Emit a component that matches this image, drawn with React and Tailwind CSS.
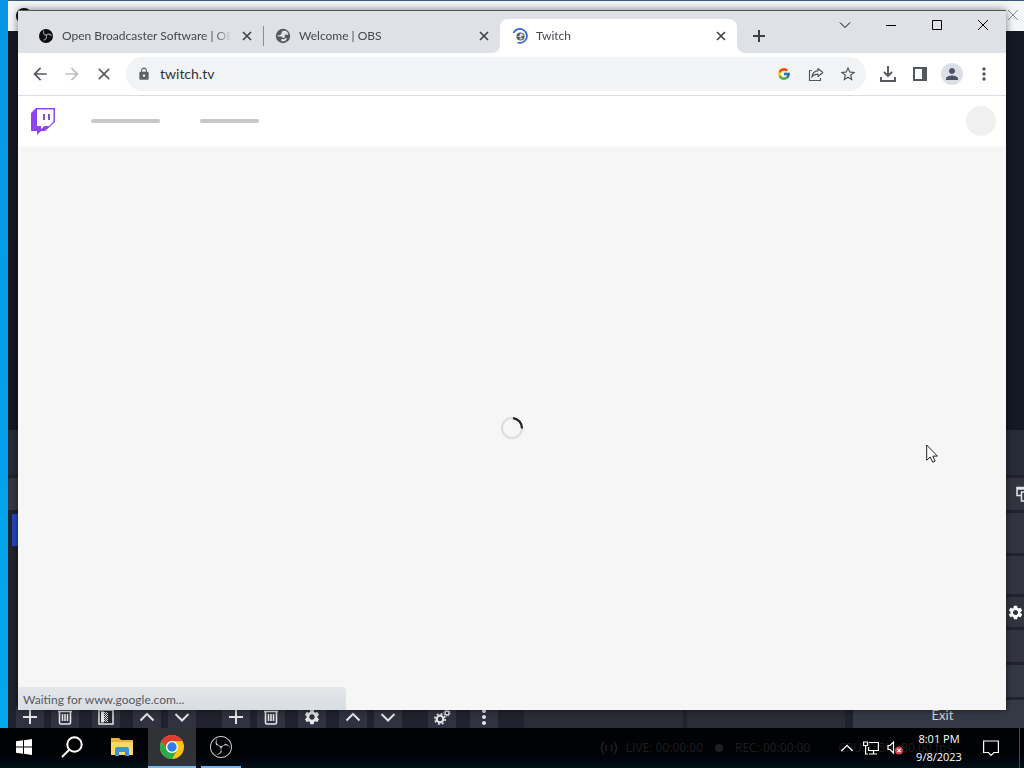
import React from "react";
import { MdArrowBack, MdArrowForward, MdClose, MdLock, MdStarOutline, MdMoreVert, MdPerson, MdSettings } from "react-icons/md";
import { FcGoogle } from "react-icons/fc";
import { SiObsstudio } from "react-icons/si";

const line = { fill: "none", stroke: "currentColor" };

function Chevron({ up, className, width = 2 }) {
  return (
    <svg viewBox="0 0 16 16" className={className} {...line} strokeWidth={width}>
      <path d={up ? "M1.5 11.5 8 5l6.5 6.5" : "M1.5 5 8 11.5 14.5 5"} />
    </svg>
  );
}

function ObsDisc({ className }) {
  return (
    <svg viewBox="0 0 24 24" className={className} fill="none">
      <circle cx="12" cy="12" r="12" fill="#0b0c10" />
      <g stroke="#9a9ea6" strokeWidth="1.800" strokeLinecap="round">
        <path d="M12.500 11C8.500 10 6.800 7 8 3.500" />
        <path d="M12.500 11c3-3.200 6.500-2.800 8.500.500" />
        <path d="M12.500 11c1.200 4-1 7.300-4.500 8" />
      </g>
    </svg>
  );
}

function Globe({ className }) {
  return (
    <svg viewBox="0 0 16 16" className={className}>
      <circle cx="8" cy="8" r="7.200" fill="#575b60" />
      <path d="M8 2.800 11.500 3 13.300 5.500 12.800 7 11 6.500 9.500 7.200 10.200 8.800 9 10 7 9.300 5.500 8.300 2.800 8.500 2.500 7.500 5 7 6.500 5.800 6.800 4z" fill="#dfe2e6" />
      <path d="m6.500 11 2.500.300 1.500-1.300 1.500.500-1.500 2.300L8 13.500 6 12.800z" fill="#dfe2e6" />
    </svg>
  );
}

function PlusIcon() {
  return (
    <svg viewBox="0 0 14 14" className="size-3.5" {...line} strokeWidth="2">
      <path d="M7 0v14M0 7h14" />
    </svg>
  );
}

function TrashIcon() {
  return (
    <svg viewBox="0 0 16 16" className="size-4" {...line} strokeWidth="1.6">
      <path d="M1 2.500h14M2.500 2.500v11q0 1.500 1.500 1.500h8q1.500 0 1.500-1.500v-11M5.500 5v7M8 5v7M10.500 5v7" />
    </svg>
  );
}

function FilterIcon() {
  return (
    <svg viewBox="0 0 16 16" className="size-4">
      <rect x="1" y="1" width="14" height="14" fill="#24262f" stroke="currentColor" strokeWidth="1.500" />
      <path d="M3 2.500h3v11H3z" fill="currentColor" />
      <path d="M6.500 3v10M8.500 3v10" stroke="currentColor" strokeDasharray="1 1" />
      <path d="M7.500 4v9M9.500 4v9" stroke="currentColor" strokeDasharray="1 1" />
    </svg>
  );
}

function GearsIcon() {
  return (
    <svg viewBox="0 0 18 18" className="size-[18px]" {...line}>
      <circle cx="7" cy="11" r="3.300" strokeWidth="2.200" />
      <circle cx="7" cy="11" r="5.200" strokeWidth="1.600" strokeDasharray="2 2.080" />
      <circle cx="14" cy="5" r="2" strokeWidth="1.400" />
      <circle cx="14" cy="5" r="3.200" strokeWidth="1" strokeDasharray="1.200 1.300" />
    </svg>
  );
}

function DockButton({ label, children }) {
  return (
    <button aria-label={label} className="flex h-[22px] w-7 items-center justify-center bg-[#30333f]">
      {children}
    </button>
  );
}

function DockTools({ middleLabel, middle }) {
  return (
    <div className="flex gap-[13px]">
      <div className="flex gap-[7px]">
        <DockButton label="Add"><PlusIcon /></DockButton>
        <DockButton label="Remove"><TrashIcon /></DockButton>
      </div>
      <DockButton label={middleLabel}>{middle}</DockButton>
      <div className="flex gap-[7px]">
        <DockButton label="Move up"><Chevron up className="size-4" /></DockButton>
        <DockButton label="Move down"><Chevron className="size-4" /></DockButton>
      </div>
    </div>
  );
}

function ObsWindow() {
  return (
    <section className="absolute inset-y-0 right-0 left-2 flex flex-col overflow-hidden bg-[#20232d] text-[#e4e6ea]">
      <header className="flex h-[31px] shrink-0 items-start justify-between border-t border-[#3c587c] bg-[#f5f6f8] pt-[7px] pl-2">
        <ObsDisc className="size-4" />
        <button aria-label="Close OBS" className="pr-1 text-[#888]">
          <svg viewBox="0 0 14 14" className="size-3.5" {...line}><path d="m2 2 10 10M12 2 2 12" /></svg>
        </button>
      </header>
      <div className="flex-1 bg-[#151923]" />
      <div className="h-[45px] bg-[#272c38]" />
      <div className="flex h-[253px] shrink-0 gap-2 pt-[3px]">
        <div className="flex flex-1 flex-col justify-between">
          <div>
            <div className="h-8 rounded-tl bg-[#363941]" />
            <div className="mt-1 ml-1 h-8 w-48 bg-[#2548bf]" />
          </div>
          <div className="flex gap-[26px] pl-2">
            <DockTools middleLabel="Filters" middle={<FilterIcon />} />
            <DockTools middleLabel="Properties" middle={<MdSettings className="size-[18px]" />} />
            <div className="flex gap-[14px]">
              <DockButton label="Advanced audio"><GearsIcon /></DockButton>
              <DockButton label="More"><MdMoreVert className="size-6" /></DockButton>
            </div>
            <div className="flex flex-1 gap-1">
              <div className="flex-1 bg-[#2a2c36]" />
              <div className="flex-1 bg-[#2a2c36]" />
            </div>
          </div>
        </div>
        <div className="flex w-[171px] flex-col gap-[3px]">
          <button aria-label="Studio mode" className="flex h-8 items-center justify-end bg-[#32353f]">
            <svg viewBox="0 0 8 16" className="h-4 w-2" {...line} strokeWidth="1.500">
              <path d="M8 1.500H1v8h4M1 3h7M8 6H5.500v9H8" />
            </svg>
          </button>
          <div className="h-10 bg-[#32353f]" />
          <div className="h-[38px] bg-[#32353f]" />
          <button aria-label="Settings" className="flex h-[30px] items-center justify-end bg-[#32353f] text-white">
            <MdSettings className="size-[17px]" />
          </button>
          <div className="h-8 bg-[#32353f]" />
          <div className="h-8 bg-[#343843]" />
          <button className="flex flex-1 items-center justify-center bg-[#363a46] pt-1 pl-2 text-[13px] text-[#d5d7db]">Exit</button>
        </div>
      </div>
    </section>
  );
}

function LoadingFavicon() {
  return (
    <span className="relative flex size-4 shrink-0 items-center justify-center">
      <Globe className="size-[9px]" />
      <svg viewBox="0 0 16 16" className="absolute inset-0 size-4" fill="none" stroke="#3569d4" strokeWidth="1.800">
        <path d="M1.500 5A7 7 0 1 1 5.500 14.500" />
      </svg>
    </span>
  );
}

function Tab({ title, icon, active, divider }) {
  return (
    <div className={active
      ? "relative flex h-[34px] max-w-[237px] flex-1 items-center rounded-t-lg bg-white pl-3"
      : "flex h-[34px] max-w-[237px] flex-1 items-center pl-3"}>
      {active && (
        <svg viewBox="0 0 8 8" className="absolute bottom-0 -left-2 size-2" fill="#fff"><path d="M8 0v8H0a8 8 0 0 0 8-8" /></svg>
      )}
      <button className="flex min-w-0 flex-1 items-center gap-2 text-left">
        {icon}
        <span className="flex-1 overflow-hidden mask-r-from-90% whitespace-nowrap">{title}</span>
      </button>
      <button aria-label={"Close " + title} className="flex w-8 items-center justify-center text-[#3c4043]">
        <svg viewBox="0 0 10 10" className="size-2.5" {...line} strokeWidth="1.600"><path d="m1 1 8 8M9 1 1 9" /></svg>
      </button>
      {divider && <span className="-mr-px h-5 w-px bg-[#8b8f94]" />}
      {active && (
        <svg viewBox="0 0 8 8" className="absolute -right-2 bottom-0 size-2" fill="#fff"><path d="M0 0v8h8a8 8 0 0 1-8-8" /></svg>
      )}
    </div>
  );
}

function CaptionButton({ label, d }) {
  return (
    <button aria-label={label} className="flex h-7 w-[46px] items-center justify-center text-black">
      <svg viewBox="0 0 12 12" className="size-3" {...line} strokeWidth="1"><path d={d} /></svg>
    </button>
  );
}

function ToolButton({ label, children }) {
  return <button aria-label={label} className="flex size-8 shrink-0 items-center justify-center text-[#54575c]">{children}</button>;
}

function BrowserWindow() {
  return (
    <section className="absolute inset-x-[18px] top-2.5 bottom-[18px] flex flex-col border-t border-[#55565c] bg-white text-xs text-[#45484d] shadow-[0_0_8px_rgba(0,0,0,0.5)]">
      <header className="flex h-[42px] shrink-0 items-end bg-[#dee1e6]">
        <div className="flex min-w-0 flex-1 pl-2">
          <Tab title="Open Broadcaster Software | OBS" divider icon={<span className="flex size-4 shrink-0 items-center justify-center"><ObsDisc className="size-3.5" /></span>} />
          <Tab title="Welcome | OBS" icon={<Globe className="size-4 shrink-0" />} />
          <Tab title="Twitch" active icon={<LoadingFavicon />} />
          <button aria-label="New tab" className="ml-2 flex h-[34px] w-7 items-center justify-center text-[#3c4043]">
            <svg viewBox="0 0 12 12" className="size-3" {...line} strokeWidth="2"><path d="M6 0v12M0 6h12" /></svg>
          </button>
        </div>
        <div className="flex self-start">
          <CaptionButton label="Search tabs" d="M1 3.500 6 8.500l5-5" />
          <CaptionButton label="Minimize" d="M1 6.500h10" />
          <CaptionButton label="Maximize" d="M1.500 1.500h9v9h-9z" />
          <CaptionButton label="Close window" d="m1 1 10 10M11 1 1 11" />
        </div>
      </header>

      <div className="flex h-[43px] shrink-0 items-center border-b border-[#dcdde1] px-1.5">
        <ToolButton label="Back"><MdArrowBack className="size-5" /></ToolButton>
        <ToolButton label="Forward"><MdArrowForward className="size-5 text-[#bcbec1]" /></ToolButton>
        <ToolButton label="Stop loading"><MdClose className="size-5" /></ToolButton>
        <div className="mx-1.5 flex h-[34px] flex-1 items-center rounded-full bg-[#f1f3f4] pr-0.5 pl-[11px]">
          <MdLock className="size-3.5 text-[#5f6368]" />
          <input aria-label="Address" defaultValue="twitch.tv" className="ml-[9px] min-w-0 flex-1 bg-transparent text-sm text-[#303236] outline-none" />
          <ToolButton label="Search with Google"><FcGoogle className="size-3.5" /></ToolButton>
          <ToolButton label="Share">
            <svg viewBox="0 0 16 16" className="size-4" {...line} strokeWidth="1.200">
              <path d="M4 4.500H1.500v10h11V12M10 2.500 14.800 6.500 10 10.500V8.200C7 8.200 5 9.200 3.800 11.200 4.200 7.500 6.400 5.200 10 4.700z" strokeLinejoin="round" />
            </svg>
          </ToolButton>
          <ToolButton label="Bookmark"><MdStarOutline className="size-[18px]" /></ToolButton>
        </div>
        <ToolButton label="Downloads">
          <svg viewBox="0 0 16 16" className="size-4" {...line} strokeWidth="1.900"><path d="M8 0v9.500M4 6l4 4 4-4M1 11v4h14v-4" /></svg>
        </ToolButton>
        <ToolButton label="Side panel">
          <svg viewBox="0 0 14 14" className="size-3.5" fill="currentColor"><path d="M0 0h14v14H0zM2 2v10h7V2z" fillRule="evenodd" /></svg>
        </ToolButton>
        <ToolButton label="Profile">
          <span className="flex size-[22px] items-center justify-center rounded-full bg-[#dcdfe6]"><MdPerson className="size-[18px] text-[#4c5468]" /></span>
        </ToolButton>
        <ToolButton label="Menu"><MdMoreVert className="size-5" /></ToolButton>
      </div>

      <div className="flex h-[51px] shrink-0 items-center pr-2.5 pb-px pl-3">
        <a href="#home" aria-label="Twitch home">
          <svg viewBox="0 0 26 28" className="h-7 w-[26px]">
            <path d="M1 6 6 1h19v14L15 24h-4l-4 4v-4H1z" fill="#8b46f0" />
            <path d="M7 2.500h16.500v12L19 19h-4.500L11 22v-3H7z" fill="#fff" />
            <path d="M13 7h2v6h-2zM18 7h2v6h-2z" fill="#8250d0" />
          </svg>
        </a>
        <span className="ml-[35px] h-1 w-[69px] rounded-full bg-[#c8c8c9]" />
        <span className="ml-10 h-1 w-[59px] rounded-full bg-[#c8c8c9]" />
        <span className="ml-auto size-[30px] rounded-full bg-[#f0f0f1]" />
      </div>
      <main className="relative flex flex-1 items-center justify-center bg-[#f6f6f7] pb-px shadow-[0_0_3px_rgba(0,0,0,0.06)]">
        <svg viewBox="0 0 24 24" className="size-6" fill="none" strokeWidth="2.200">
          <circle cx="12" cy="12" r="10" stroke="#dedede" />
          <path d="M13 2.100A10 10 0 0 1 22 12.500" stroke="#222" />
        </svg>
        <p className="absolute bottom-0 left-0 h-[23px] w-[328px] rounded-tr bg-linear-to-b from-[#e4e6e9] to-[#d9dee4] pl-[5px] leading-[26px] text-[#55595e]">Waiting for www.google.com...</p>
      </main>
    </section>
  );
}

function ChromeLogo() {
  return (
    <svg viewBox="0 0 24 24" className="size-6">
      <circle cx="12" cy="12" r="12" fill="#fbc116" />
      <path d="M1.600 6A12 12 0 0 1 22.400 6H12a6 6 0 0 0-5.200 9z" fill="#e33b2e" />
      <path d="M1.600 6A12 12 0 0 0 12 24l5.200-9A6 6 0 0 1 6.800 15z" fill="#2da94f" />
      <circle cx="12" cy="12" r="6" fill="#fff" />
      <circle cx="12" cy="12" r="4.700" fill="#2f7de9" />
    </svg>
  );
}

function FolderIcon() {
  return (
    <svg viewBox="0 0 22 20" className="h-5 w-[22px]">
      <path d="M0 1h8l2 2h12v15H0z" fill="#e9b33b" />
      <path d="M0 5h22v13H0z" fill="#fcd66e" />
      <path d="M4 19v-7q0-2 2-2h10q2 0 2 2v7h-4v-4H8v4z" fill="#3c94d6" />
    </svg>
  );
}

function TaskbarButton({ label, children, className = "" }) {
  return <button aria-label={label} className={"flex h-10 w-12 items-center justify-center border-b-2 " + (className || "border-transparent")}>{children}</button>;
}

function Taskbar() {
  return (
    <footer className="relative flex h-10 shrink-0 bg-linear-to-b from-[#010204] from-60% to-[#001019] text-white">
      <div className="absolute inset-y-0 right-[72px] flex items-center font-['Open_Sans',sans-serif] text-xs whitespace-nowrap text-[#1d1f22]">
        <svg viewBox="0 0 18 14" className="mr-2 h-3.5 w-[18px]" {...line} strokeWidth="1.500">
          <path d="M4 1q-5 6 0 12M14 1q5 6 0 12M7 4q-2.500 3 0 6M11 4q2.500 3 0 6" />
        </svg>
        <span>LIVE: 00:00:00</span>
        <span className="mr-3 ml-3 size-2 rounded-full bg-[#1d1f22]" />
        <span>REC: 00:00:00</span>
        <span className="ml-7">CPU: 0.5%, 30.00 fps</span>
      </div>
      <nav className="flex">
        <TaskbarButton label="Start">
          <svg viewBox="0 0 16 16" className="size-4" fill="#fff"><path d="M0 2.300 7 1.300v6.200H0zM8 1.200 16 0v7.500H8zM0 8.500h7v6.200l-7-1zM8 8.500h8V16l-8-1.200z" /></svg>
        </TaskbarButton>
        <TaskbarButton label="Search">
          <svg viewBox="0 0 22 22" className="size-[22px]" {...line} strokeWidth="2"><circle cx="13.500" cy="8.500" r="7.200" /><path d="M8.500 13.500 1 21" /></svg>
        </TaskbarButton>
        <div className="ml-0.5 flex gap-0.5">
          <TaskbarButton label="File Explorer"><FolderIcon /></TaskbarButton>
          <TaskbarButton label="Google Chrome" className="border-[#76b9ed] bg-[#303235]"><ChromeLogo /></TaskbarButton>
          <div className="flex pl-[3px]">
            <button aria-label="OBS Studio" className="flex h-10 w-10 items-center justify-center border-b-2 border-[#76b9ed]">
              <SiObsstudio className="size-[22px] text-[#c9c9c9]" />
            </button>
          </div>
        </div>
      </nav>
      <div className="relative ml-auto flex items-center">
        <button aria-label="Show hidden icons" className="flex w-6 justify-center"><Chevron up width={1.6} className="size-3.5" /></button>
        <button aria-label="Network" className="flex w-6 justify-center">
          <svg viewBox="0 0 16 14" className="h-3.5 w-4" {...line} strokeWidth="1.200">
            <path d="M6 1.500h9.400v8H5.500V6M10.500 9.500v3.500M6 13h8M.600 1h4v3.500h-4zM2.600 4.500V13H5" />
          </svg>
        </button>
        <button aria-label="Volume" className="flex w-6 justify-center">
          <svg viewBox="0 0 16 14" className="h-3.5 w-4" {...line} strokeWidth="1.200">
            <path d="M1 4.500h2L6.500 1v11L3 8.500H1z" />
            <circle cx="12" cy="9.500" r="4" fill="#cf4450" stroke="none" />
            <path d="m10.300 7.800 3.400 3.400M13.700 7.800l-3.400 3.400" />
          </svg>
        </button>
        <button className="w-16 text-center font-['Open_Sans',sans-serif] text-[11px] leading-[18px]"><span className="block">8:01 PM</span><span className="block">9/8/2023</span></button>
        <button aria-label="Notifications" className="mr-2 flex w-10 justify-center">
          <svg viewBox="0 0 16 16" className="size-4" {...line} strokeWidth="1.200"><path d="M.600 1h14.800v11.500h-4.400L8 15.300 5.500 12.500H.600z" /></svg>
        </button>
        <button aria-label="Show desktop" className="h-10 w-[5px] border-l border-[#45484c]" />
      </div>
    </footer>
  );
}

export default function App() {
  return (
    <div className="flex h-screen flex-col overflow-hidden font-[Lato,'Open_Sans',sans-serif]">
      <div className="relative flex-1 bg-linear-to-b from-[#0796e6] to-[#02a8ee]">
        <ObsWindow />
        <BrowserWindow />
        <svg viewBox="0 0 12 19" className="absolute top-[444px] left-[926px] h-[19px] w-3" fill="#fff" stroke="#222">
          <path d="M.700 1v15.300l3.500-3.300 2.500 5.200 2.400-1.100-2.400-5h4.700z" />
        </svg>
      </div>
      <Taskbar />
    </div>
  );
}
